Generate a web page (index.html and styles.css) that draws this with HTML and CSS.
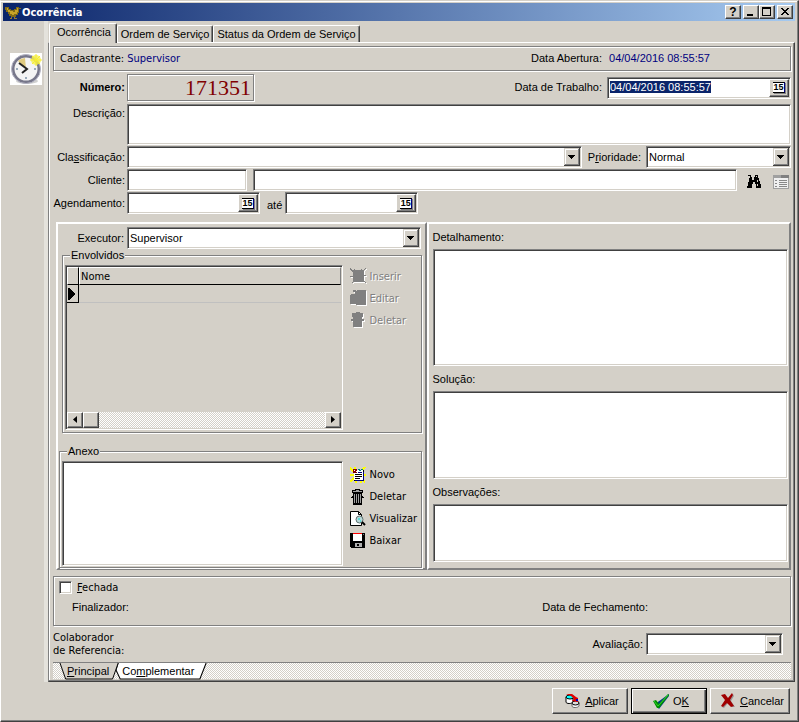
FILE: index.html
```
<!DOCTYPE html>
<html lang="pt-BR">
<head>
    <meta charset="UTF-8">
    <meta name="viewport" content="width=device-width, initial-scale=1.0">
    <title>Ocorrência</title>
    <link rel="stylesheet" href="styles.css">
</head>
<body>
<div class="window">
    <header class="titlebar">
        <svg class="icon" width="16" height="16" viewBox="0 0 16 16" shape-rendering="crispEdges">
            <path fill="#806a18" d="M0 3h4v2h2v1h3v-1h2v-2h3v1h2v1h-2v4h-1v2h-2v2h-5v-1h-2v-2h-1v-2h-2v-2h-1z"/>
            <path fill="#c8a428" d="M2 4h1v2h2v1h3v1h2v-2h2v-2h1v4h-1v2h-3v1h-2v-1h-2v-2h-2v-2h-1z"/>
            <path fill="#907838" d="M6 13h1v2h-2v-1h1zM9 13h1v1h2v1h-3z"/>
        </svg>
        <h1>Ocorrência</h1>
        <div class="caption-buttons">
            <button type="button" class="caption help" aria-label="Ajuda">?</button>
            <button type="button" class="caption" aria-label="Minimizar">
                <svg width="10" height="10" shape-rendering="crispEdges"><path d="M1 7h6v2h-6z"/></svg>
            </button>
            <button type="button" class="caption" aria-label="Maximizar">
                <svg width="10" height="10" shape-rendering="crispEdges"><path fill-rule="evenodd" d="M0 0h9v9h-9zM1 2v6h7v-6z"/></svg>
            </button>
            <button type="button" class="caption close" aria-label="Fechar">
                <svg width="10" height="10" shape-rendering="crispEdges"><path d="M1 1h2v1h1v1h2v-1h1v-1h2v1h-1v1h-1v1h-1v1h1v1h1v1h1v1h-2v-1h-1v-1h-2v1h-1v1h-2v-1h1v-1h1v-1h1v-1h-1v-1h-1v-1h-1z"/></svg>
            </button>
        </div>
    </header>

    <div class="workspace">
        <aside class="sidebar">
            <svg width="32" height="32" viewBox="0 0 32 32">
                <rect width="32" height="32" fill="#fff"/>
                <ellipse cx="17" cy="28" rx="11" ry="3" fill="#d0d0d0"/>
                <circle cx="16" cy="16" r="13" fill="#f4f4f4" stroke="#77778a" stroke-width="3"/>
                <circle cx="16" cy="16" r="14.500" fill="none" stroke="#b4b4c4"/>
                <path d="M16 16L8 8a11 11 0 0 1 7-3z" fill="#e0cb80"/>
                <path d="M9 10l8 6-5 4" fill="none" stroke="#222" stroke-width="2"/>
                <path d="M6 16h2M24 16h2M16 24v2" stroke="#99aabb" stroke-width="2"/>
                <circle cx="26" cy="7" r="5" fill="#f4ef50" opacity=".8"/>
                <path d="M26 1v12M20 7h12M22 3l8 8M30 3l-8 8" stroke="#f8ee30"/>
            </svg>
        </aside>

        <div class="tabs">
            <nav class="tab-strip">
                <button type="button" class="tab active">Ocorrência</button>
                <button type="button" class="tab">Ordem de Serviço</button>
                <button type="button" class="tab">Status da Ordem de Serviço</button>
            </nav>

            <form class="page">
                <section class="etched creator">
                    <span class="tahoma">Cadastrante: <span class="value">Supervisor</span></span>
                    <span class="opened">Data Abertura: <span class="value date-value">04/04/2016 08:55:57</span></span>
                </section>

                <div class="form">
                    <div class="row number-row">
                        <label class="name strong" for="numero">Número:</label>
                        <input class="number" id="numero" value="171351" readonly>
                        <label class="push" for="trabalho">Data de Trabalho:</label>
                        <span class="field date work-date">
                            <input id="trabalho" value="04/04/2016 08:55:57">
                            <button type="button" class="calendar"><span>15</span></button>
                        </span>
                    </div>
                    <div class="row description-row">
                        <label class="name" for="descricao">Descrição:</label>
                        <textarea class="field grow description" id="descricao"></textarea>
                    </div>
                    <div class="row">
                        <label class="name" for="classificacao">Cla<u>s</u>sificação:</label>
                        <select class="field grow" id="classificacao"><option></option></select>
                        <label class="beside" for="prioridade">P<u>r</u>ioridade:</label>
                        <select class="field priority" id="prioridade"><option>Normal</option></select>
                    </div>
                    <div class="row">
                        <label class="name" for="cliente">Cliente:</label>
                        <input class="field client-code" id="cliente">
                        <input class="field grow" aria-label="Nome do cliente">
                        <button type="button" class="flat search" aria-label="Pesquisar">
                            <svg width="16" height="14" viewBox="0 0 16 14" shape-rendering="crispEdges">
                                <path d="M3 0h3v2h1v3h2v-3h1v-2h3v3h1v3h1v3h1v4h-5v-4h-1v-2h-2v2h-1v4h-5v-4h1v-3h1v-3h1z"/>
                                <path fill="#d4d0c8" d="M4 1h1v1h-1zM11 1h1v1h-1zM3 5h1v2h-1zM12 5h1v2h-1zM2 9h1v2h-1zM12 9h1v2h-1z"/>
                            </svg>
                        </button>
                        <button type="button" class="flat" aria-label="Detalhes do cliente">
                            <svg width="16" height="14" viewBox="0 0 16 14" shape-rendering="crispEdges">
                                <path fill="#a0a0a0" d="M0 0h16v14h-16z"/>
                                <path fill="#808080" d="M8 0h8v3h-8z"/>
                                <path fill="#f0f0f0" d="M1 3h14v10h-14z"/>
                                <path stroke="#888" d="M2 5.500h2M2 8.500h2M2 11.500h2M6 5.500h8M6 7.500h8M6 9.500h8M6 11.500h8"/>
                            </svg>
                        </button>
                    </div>
                    <div class="row">
                        <label class="name" for="inicio">Agendamento:</label>
                        <span class="field date">
                            <input id="inicio">
                            <button type="button" class="calendar"><span>15</span></button>
                        </span>
                        <label class="until" for="fim">até</label>
                        <span class="field date">
                            <input id="fim">
                            <button type="button" class="calendar"><span>15</span></button>
                        </span>
                    </div>
                </div>

                <div class="panels">
                    <div class="panel people">
                        <div class="row executor-row">
                            <label class="executor-name" for="executor">Executor:</label>
                            <select class="field grow" id="executor"><option>Supervisor</option></select>
                        </div>
                        <fieldset class="group involved">
                            <legend>Envolvidos</legend>
                            <div class="group-body">
                                <div class="field grid">
                                    <table>
                                        <thead><tr><th class="marker"></th><th>Nome</th></tr></thead>
                                        <tbody><tr><td class="marker"><svg width="7" height="12" shape-rendering="crispEdges"><path d="M0 0h1l6 6-6 6h-1z"/></svg></td><td></td></tr></tbody>
                                    </table>
                                    <div class="scrollbar">
                                        <button type="button" aria-label="Rolar à esquerda"><svg width="4" height="7"><path d="M4 0v7l-4-3.500z"/></svg></button>
                                        <span class="thumb"></span>
                                        <span class="track"></span>
                                        <button type="button" aria-label="Rolar à direita"><svg width="4" height="7"><path d="M0 0v7l4-3.500z"/></svg></button>
                                    </div>
                                </div>
                                <div class="actions">
                                    <button type="button" class="flat" disabled>
                                        <svg width="16" height="16" viewBox="0 0 16 16" shape-rendering="crispEdges"><path d="M0 0h1v1h1v1h2v-1h1v1h6v-1h1v1h2v-1h1v-1h1v1h-1v1h-1v5h2v1h-2v5h1v1h1v1h-1v-1h-12v1h-1v-1h1v-5h-3v-1h3v-4h-1v-1h-1v-1h-1z"/></svg>
                                        Inserir
                                    </button>
                                    <button type="button" class="flat" disabled>
                                        <svg width="16" height="16" viewBox="0 0 16 16" shape-rendering="crispEdges"><path d="M3 0h3v1h1v-1h9v15h-10v-1h-6v-9h1v-1h4v-2h-2z"/></svg>
                                        Editar
                                    </button>
                                    <button type="button" class="flat" disabled>
                                        <svg width="16" height="16" viewBox="0 0 16 16" shape-rendering="crispEdges"><path d="M6 0h4v1h3v4h-1v2h2v2h-2v6h-9v-6h-2v-2h2v-2h-1v-4h4z"/></svg>
                                        Deletar
                                    </button>
                                </div>
                            </div>
                        </fieldset>
                        <fieldset class="group attachment">
                            <legend>Anexo</legend>
                            <div class="group-body">
                                <div class="field list"></div>
                                <div class="actions">
                                    <button type="button" class="flat">
                                        <svg width="16" height="16" viewBox="0 0 16 16" shape-rendering="crispEdges">
                                            <path stroke="#ff0" stroke-width="2" d="M0 1l15 14M15 0l-15 15M5 0v3M0 8h16M6 13v3M11 13v3"/>
                                            <path fill="#000" d="M4 3h10v11h-10z"/><path fill="#fff" d="M4 3h9v10h-9z"/>
                                            <path fill="#800000" d="M3 2h4v4h-4z"/><path fill="#fff" d="M4 3h1v1h-1zM6 4h1v1h-1z"/>
                                            <path fill="#008080" d="M8 2h2v1h-2zM11 2h2v1h-2zM9 3h2v1h-2z"/>
                                            <path stroke="#000080" d="M8 5.500h4M5 13.500h9M13.500 5v8"/><path stroke="#000" d="M5 7.500h7M5 9.500h7M5 11.500h5"/>
                                        </svg>
                                        Novo
                                    </button>
                                    <button type="button" class="flat">
                                        <svg width="16" height="16" viewBox="0 0 16 16" shape-rendering="crispEdges">
                                            <path d="M5 0h5v1h3v3h-1v3h1v1h1v1h-2v7h-9v-7h-2v-1h1v-1h1v-3h-1v-3h3z"/>
                                            <path fill="#a0a0a0" d="M3 2h9v1h-9zM6 1h3v1h-3zM4 5h1v9h-1zM6 5h1v9h-1zM8 5h1v9h-1zM10 5h1v9h-1z"/>
                                        </svg>
                                        Deletar
                                    </button>
                                    <button type="button" class="flat">
                                        <svg width="16" height="16" viewBox="0 0 16 16">
                                            <path fill="#fff" stroke="#000" d="M.5.500h8l3 3v11h-11z"/><path fill="none" stroke="#000" d="M8.500.500v3h3"/>
                                            <circle cx="9.500" cy="8.500" r="3.500" fill="#b8d8d8" stroke="#607070"/>
                                            <path stroke="#00e0e0" d="M8 8h2M10 10h1"/><path stroke="#000" stroke-width="2" d="M12 11l3 3"/>
                                        </svg>
                                        Visualizar
                                    </button>
                                    <button type="button" class="flat">
                                        <svg width="16" height="16" viewBox="0 0 16 16" shape-rendering="crispEdges">
                                            <path d="M0 0h15v15h-14l-1-1z"/><path fill="#fff" d="M3 1h9v7h-9z"/><path fill="#f00" d="M3 0h9v1h-9z"/>
                                            <path fill="#b0b0b0" d="M5 10h7v4h-7z"/><path d="M7 11h2v2h-2z"/><path fill="#808080" d="M13 1h1v1h-1z"/>
                                        </svg>
                                        Baixar
                                    </button>
                                </div>
                            </div>
                        </fieldset>
                    </div>
                    <div class="panel notes">
                        <label for="detalhamento">Detalhamento:</label>
                        <textarea class="field detail" id="detalhamento"></textarea>
                        <label for="solucao">Solução:</label>
                        <textarea class="field solution" id="solucao"></textarea>
                        <label for="observacoes">Observações:</label>
                        <textarea class="field remarks" id="observacoes"></textarea>
                    </div>
                </div>

                <section class="etched closing">
                    <label class="tahoma closed"><input type="checkbox"><span><u>F</u>echada</span></label>
                    <div class="closing-info">
                        <span>Finalizador:</span>
                        <span>Data de Fechamento:</span>
                    </div>
                </section>

                <div class="row reference-row">
                    <span class="tahoma">Colaborador<br>de Referencia:</span>
                    <label class="push" for="avaliacao">Avaliação:</label>
                    <select class="field rating" id="avaliacao"><option></option></select>
                </div>

                <nav class="sheet-tabs">
                    <button type="button" class="sheet active">
                        <svg viewBox="0 0 62 17" preserveAspectRatio="none"><path d="M0 0l6 16h50l6-16"/></svg>
                        <span><u>P</u>rincipal</span>
                    </button>
                    <button type="button" class="sheet">
                        <svg viewBox="0 0 86 17" preserveAspectRatio="none"><path d="M2 0l-2 7 4 9h76l6-16"/></svg>
                        <span>Co<u>m</u>plementar</span>
                    </button>
                </nav>
            </form>
        </div>
    </div>

    <footer class="buttons">
        <button type="button" class="push-button">
            <svg width="16" height="16" viewBox="0 0 16 16">
                <path fill="#fff" stroke="#000" d="M1 4v5c0 2 6 2 7 0v-5z"/><ellipse cx="5" cy="4" rx="4" ry="2" fill="#0ff" stroke="#000"/>
                <path fill="#fff" stroke="#666" d="M7 10v3c0 2 6 2 7 0v-3z"/><ellipse cx="10.500" cy="10" rx="3.500" ry="2" fill="#ddd" stroke="#000"/>
                <path fill="#e00000" d="M1 1h6l4 3 2 1v4l-6-1 2-2-3-3z"/><path fill="#0000c0" d="M11 6h2v2h-2z"/>
            </svg>
            <span><u>A</u>plicar</span>
        </button>
        <button type="submit" class="push-button default">
            <svg width="16" height="16" viewBox="0 0 16 16">
                <path fill="#004080" d="M2 11l4 5 10-13v-2z"/><path fill="#009000" d="M0 8l3-1 3 4 9-10 1 1-10 13h-2z"/><path fill="none" stroke="#30d030" d="M1 8l4 5 10-11"/>
            </svg>
            <span>O<u>K</u></span>
        </button>
        <button type="button" class="push-button">
            <svg width="16" height="16" viewBox="0 0 16 16">
                <path fill="#989898" d="M3 2l6 4 4-5 1 2-3 5 4 6h-3l-4-4-4 5-2-1 4-6z"/>
                <path fill="#a00000" d="M1 2l4-1 3 4 4-5 1 2-3 5 4 6-3 1-4-4-4 4-2-1 4-6z"/>
            </svg>
            <span><u>C</u>ancelar</span>
        </button>
    </footer>
</div>
<script>
    // the working date starts out focused, with its text selected
    var workDate = document.getElementById('trabalho');
    workDate.focus();
    workDate.select();
</script>
</body>
</html>
```
FILE: styles.css
```
:root {
    --face: #d4d0c8;
    --shadow: #808080;
    --dark: #404040;
}
* { box-sizing: border-box; }
body {
    margin: 0;
    background: var(--face);
    color: #000;
    font: 11px/13px "Liberation Sans", Arial, sans-serif;
}
button, input, select, textarea {
    font: inherit;
    color: inherit;
    margin: 0;
    outline: none;
}
button { line-height: 13px; }
svg { display: block; flex: none; }

.tahoma, .flat, .titlebar h1, .grid th {
    font-family: "DejaVu Sans Condensed", "DejaVu Sans", sans-serif;
}
.value { color: #000080; }
.push { margin-left: auto; }
.grow { flex: 1; min-width: 0; }

/* Window frame and title */
.window {
    display: flex;
    flex-direction: column;
    min-height: 100vh;
    padding: 2px 3px 1px 2px;
    border: 1px solid var(--dark);
    border-top-color: var(--face);
    border-left-color: #fff;
    box-shadow: inset -1px -1px 0 var(--shadow), inset 0 1px 0 #fff;
}
.titlebar {
    display: flex;
    align-items: center;
    height: 18px;
    padding: 0 2px;
    background: linear-gradient(to right, #0a246a, #a6caf0);
    color: #fff;
}
.titlebar h1 {
    margin: 0 auto 0 1px;
    font-size: 11px;
    font-weight: bold;
}
.caption-buttons { display: flex; color: #000; }
.caption {
    display: flex;
    align-items: center;
    justify-content: center;
    width: 16px;
    height: 14px;
    padding: 0;
    background: var(--face);
    border: 1px solid;
    border-color: #fff var(--dark) var(--dark) #fff;
    box-shadow: inset -1px -1px 0 var(--shadow);
}
.caption.help { margin-right: 2px; font-size: 12px; font-weight: bold; }
.caption.close { margin-left: 2px; }

/* Sidebar and main tabs */
.workspace { display: flex; flex: 1; }
.sidebar {
    width: 45px;
    padding: 32px 0 0 7px;
    border-right: 4px solid #e4e2dc;
}
.tabs {
    display: flex;
    flex: 1;
    flex-direction: column;
    min-width: 0;
    padding-top: 2px;
}
.tab-strip {
    display: flex;
    align-items: flex-end;
    height: 19px;
    padding-left: 1px;
}
.tab {
    height: 17px;
    padding: 0 3px;
    background: var(--face);
    border: 1px solid;
    border-color: #fff var(--dark) transparent #fff;
    border-bottom: 0;
    border-radius: 2px 2px 0 0;
    box-shadow: inset -1px 0 0 var(--shadow);
}
.tab.active {
    position: relative;
    height: 20px;
    margin-bottom: -1px;
    padding: 0 5px 3px 7px;
}
.page {
    display: flex;
    flex: 1;
    flex-direction: column;
    padding: 3px 3px 2px;
    border: 1px solid;
    border-color: #fff var(--dark) var(--dark) var(--shadow);
    box-shadow: inset -1px -1px 0 var(--shadow), inset 1px 0 0 #fff;
}
.etched {
    margin-left: 1px;
    border: 1px solid var(--shadow);
    box-shadow: 1px 1px 0 #fff, inset 1px 1px 0 #fff;
}
.creator {
    display: flex;
    align-items: center;
    justify-content: space-between;
    height: 25px;
    padding: 0 80px 0 6px;
}
.date-value { margin-left: 4px; }

/* Fields */
.field {
    height: 22px;
    padding: 0 2px;
    background-color: #fff;
    border: 1px solid;
    border-color: var(--shadow) #fff #fff var(--shadow);
    border-radius: 0;
    box-shadow: inset 1px 1px 0 var(--dark), inset -1px -1px 0 var(--face);
}
textarea.field { resize: none; }
select.field {
    appearance: none;
    padding: 0 20px 0 2px;
    background-image: url("data:image/svg+xml,%3Csvg xmlns='http://www.w3.org/2000/svg' width='16' height='18' shape-rendering='crispEdges'%3E%3Cpath fill='%23404040' d='M0 0h16v18H0z'/%3E%3Cpath fill='%23d4d0c8' d='M0 0h15v17H0z'/%3E%3Cpath fill='%23808080' d='M1 1h14v16H1z'/%3E%3Cpath fill='%23fff' d='M1 1h13v15H1z'/%3E%3Cpath fill='%23d4d0c8' d='M2 2h12v14H2z'/%3E%3Cpath d='M4 7h7v1H4zM5 8h5v1H5zM6 9h3v1H6zM7 10h1v1H7z'/%3E%3C/svg%3E");
    background-repeat: no-repeat;
    background-position: right 1px top 1px;
}
.date {
    display: flex;
    align-items: stretch;
    width: 133px;
    padding: 1px;
}
.date input {
    flex: 1;
    align-self: flex-start;
    min-width: 0;
    height: 17px;
    padding: 0 1px;
    background: transparent;
    border: 0;
}
.date input::selection { background: #0a246a; color: #fff; }
.calendar {
    display: flex;
    align-items: center;
    justify-content: center;
    width: 20px;
    padding: 0;
    background: var(--face);
    border: 1px solid;
    border-color: #fff var(--dark) var(--dark) #fff;
    box-shadow: inset -1px -1px 0 var(--shadow);
}
.calendar span {
    width: 12px;
    height: 11px;
    background: #fff;
    border: 1px solid #000;
    border-left: 0;
    border-right-color: #000080;
    box-shadow: 1px 1px 0 var(--shadow);
    font-size: 9px;
    font-weight: bold;
    line-height: 9px;
}

/* Main form */
.form {
    display: flex;
    flex-direction: column;
    gap: 1px;
    padding: 3px 0 0 1px;
}
.row { display: flex; align-items: center; }
.name {
    width: 74px;
    padding-right: 2px;
    text-align: right;
    white-space: nowrap;
}
.strong { font-weight: bold; }
.number-row { margin-bottom: 2px; }
.number {
    width: 127px;
    height: 27px;
    padding: 0 2px;
    background: var(--face);
    border: 1px solid var(--shadow);
    box-shadow: 1px 1px 0 #fff, inset 1px 1px 0 #fff;
    color: #800000;
    font: 22px "Liberation Serif", "Times New Roman", serif;
    text-align: right;
}
.work-date { width: 184px; margin-left: 5px; }
.description-row { align-items: flex-start; }
.description-row .name { padding-top: 3px; }
.description { height: 41px; }
.beside { margin: 0 5px 0 6px; }
.priority { width: 145px; }
.client-code { width: 120px; margin-right: 6px; }
.until { margin: 4px 3px 0 7px; }
.flat {
    display: flex;
    align-items: center;
    gap: 4px;
    padding: 0;
    background: none;
    border: 0;
}
.row .flat { margin: 4px 2px 0 12px; }
.row .search { margin: 4px 0 0 8px; }

/* Raised panels */
.panels {
    display: grid;
    grid-template-columns: minmax(0, 370fr) minmax(0, 364fr);
    flex: 1;
    margin: 8px 0 6px 4px;
}
.panel {
    display: flex;
    flex-direction: column;
    border: 2px solid;
    border-color: #fff var(--shadow) var(--shadow) #fff;
}
.people { padding: 3px 3px 0 1px; }
.executor-row { padding-right: 1px; }
.executor-name {
    width: 68px;
    padding-right: 3px;
    text-align: right;
}
.group {
    display: flex;
    flex-direction: column;
    min-width: 0;
    margin: 0;
    padding: 3px 2px 2px;
    border: 1px solid var(--shadow);
    box-shadow: 1px 1px 0 #fff, inset 1px 1px 0 #fff;
}
.group legend {
    margin-left: 5px;
    padding: 0 1px;
    background: var(--face);
}
.group-body { display: flex; height: 100%; }
.involved { flex: 185 1 0; margin: 0 0 12px 3px; }
.attachment { flex: 123 1 0; padding-bottom: 1px; }
.list { flex: 1; height: auto; }
.actions {
    width: 76px;
    padding: 0 0 0 7px;
}
.actions .flat { height: 22px; }
.attachment .actions { padding-top: 3px; }
.flat:disabled { color: var(--shadow); text-shadow: 1px 1px 0 #fff; }
.flat:disabled svg { fill: var(--shadow); filter: drop-shadow(1px 1px 0 #fff); }

.grid {
    display: flex;
    flex: 1;
    flex-direction: column;
    justify-content: space-between;
    height: auto;
    padding: 1px;
    background: var(--face);
}
.grid table { width: 100%; border-collapse: separate; border-spacing: 0; }
.grid th, .grid td { height: 18px; padding: 0 1px; }
.grid th {
    border: 1px solid;
    border-color: #fff var(--shadow) #000 #fff;
    font-weight: normal;
    text-align: left;
}
.grid td { border-bottom: 1px solid #c0c0c0; }
.grid .marker { width: 12px; border-right: 1px solid #000; }
.grid td.marker { border-bottom-color: #000; }
.scrollbar {
    display: flex;
    height: 16px;
    background: repeating-conic-gradient(#fff 0 25%, var(--face) 0 50%) 0 0 / 2px 2px;
}
.scrollbar button, .thumb {
    display: flex;
    align-items: center;
    justify-content: center;
    width: 16px;
    padding: 0;
    background: var(--face);
    border: 1px solid;
    border-color: #fff var(--dark) var(--dark) #fff;
    box-shadow: inset -1px -1px 0 var(--shadow);
}
.track { flex: 1; }

.notes { padding: 7px 1px 6px 4px; }
.notes label { margin-bottom: 5px; }
.notes .field { margin-bottom: 7px; min-height: 0; }
.notes .detail { flex: 117 1 0; }
.notes .solution { flex: 87 1 0; }
.notes .remarks { flex: 57 1 0; margin-bottom: 0; }

/* Closing section */
.closing { height: 50px; padding: 4px 5px; }
.closed { display: flex; align-items: center; gap: 5px; }
.closed input {
    appearance: none;
    width: 13px;
    height: 13px;
    background: #fff;
    border: 1px solid;
    border-color: var(--shadow) #fff #fff var(--shadow);
    box-shadow: inset 1px 1px 0 var(--dark), inset -1px -1px 0 var(--face);
}
.closing-info {
    display: flex;
    justify-content: space-between;
    padding: 7px 137px 0 13px;
}
.reference-row { padding: 5px 8px 5px 1px; }
.rating { width: 137px; margin-left: 3px; }

.sheet-tabs {
    display: flex;
    height: 17px;
    margin-left: 1px;
    padding-left: 7px;
    border-top: 1px solid var(--shadow);
    background: repeating-conic-gradient(#fff 0 25%, var(--face) 0 50%) 0 0 / 2px 2px;
}
.sheet {
    position: relative;
    height: 17px;
    padding: 0 12px 0 6px;
    background: none;
    border: 0;
}
.sheet.active { z-index: 1; margin-right: -2px; padding: 0 9px 0 7px; }
.sheet svg {
    position: absolute;
    inset: 0;
    width: 100%;
    height: 100%;
    overflow: visible;
    fill: #fff;
    stroke: #000;
}
.sheet.active svg { fill: var(--face); }
.sheet span { position: relative; }

/* Dialog buttons */
.buttons {
    display: flex;
    justify-content: flex-end;
    gap: 3px;
    padding: 6px 5px;
}
.push-button {
    display: flex;
    align-items: center;
    justify-content: center;
    gap: 4px;
    min-width: 76px;
    height: 26px;
    padding: 0 5px 0 9px;
    background: var(--face);
    border: 1px solid;
    border-color: #fff var(--dark) var(--dark) #fff;
    box-shadow: inset -1px -1px 0 var(--shadow);
}
.push-button.default {
    border-color: #000;
    box-shadow: inset 1px 1px 0 #fff, inset -1px -1px 0 var(--dark), inset -2px -2px 0 var(--shadow);
}
```
